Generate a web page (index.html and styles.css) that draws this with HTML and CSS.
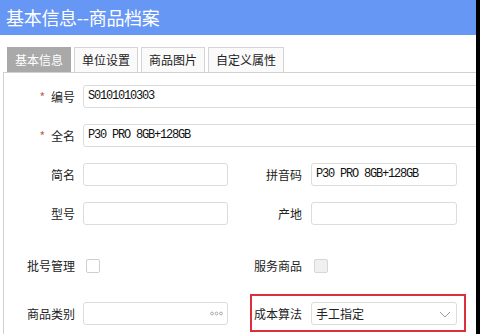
FILE: index.html
```html
<!DOCTYPE html>
<html lang="zh">
  <head>
    <meta charset="UTF-8" />
    <title>基本信息--商品档案</title>
    <link rel="stylesheet" href="styles.css">
  </head>
  <body>
    <div class="page">
      <header class="title-bar">基本信息--商品档案</header>

      <ul class="tabs">
        <li class="tab active">基本信息</li>
        <li class="tab">单位设置</li>
        <li class="tab">商品图片</li>
        <li class="tab">自定义属性</li>
      </ul>

      <div class="panel">
        <div class="row">
          <label class="label"><span class="star">*</span>编号</label>
          <div class="field wide">S0101010303</div>
        </div>

        <div class="row">
          <label class="label"><span class="star">*</span>全名</label>
          <div class="field wide">P30 PRO 8GB+128GB</div>
        </div>

        <div class="row">
          <label class="label">简名</label>
          <div class="field"></div>
          <div class="cell">
            <label class="label-r">拼音码</label>
            <div class="field">P30 PRO 8GB+128GB</div>
          </div>
        </div>

        <div class="row">
          <label class="label">型号</label>
          <div class="field"></div>
          <div class="cell">
            <label class="label-r">产地</label>
            <div class="field"></div>
          </div>
        </div>

        <div class="row check-row">
          <label class="label">批号管理</label>
          <div class="box-wrap"><span class="checkbox"></span></div>
          <div class="cell">
            <label class="label-r">服务商品</label>
            <div class="box-wrap"><span class="checkbox disabled"></span></div>
          </div>
        </div>

        <div class="row last-row">
          <label class="label">商品类别</label>
          <div class="field picker">
            <svg class="dots" width="13" height="5" viewBox="0 0 13 5">
              <circle cx="2" cy="2.5" r="1.4" />
              <circle cx="6.5" cy="2.5" r="1.4" />
              <circle cx="11" cy="2.5" r="1.4" />
            </svg>
          </div>
          <div class="cell marked">
            <label class="label-r">成本算法</label>
            <div class="field select">
              <span class="select-text">手工指定</span>
              <svg class="chevron" width="12" height="7" viewBox="0 0 12 7">
                <polyline points="1,1 6,6 11,1" />
              </svg>
            </div>
          </div>
        </div>
      </div>
    </div>
  </body>
</html>
```

FILE: styles.css
```css
* {
  margin: 0;
  padding: 0;
  box-sizing: border-box;
}

html, body {
  height: 100%;
}

body {
  background: #000; /* dark strip on the right edge */
  font-family: "Noto Sans CJK SC", "Noto Sans", sans-serif;
  font-size: 12px;
  color: #333;
  overflow: hidden;
}

.page {
  width: 476px;
  height: 334px;
  background: #fff;
  overflow: hidden;
}

.title-bar {
  height: 35px;
  line-height: 34px;
  padding-left: 6px;
  background: #6797f5;
  color: #fff;
  font-size: 18px;
  letter-spacing: -0.3px;
}

/* tabs */
.tabs {
  display: flex;
  gap: 3px;
  list-style: none;
  margin: 12px 0 0 7px;
  height: 25px;
}

.tab {
  height: 25px;
  line-height: 23px;
  padding: 0 7px;
  border: 1px solid #d4d4d4;
  border-bottom: none;
  background: #fafafa;
  color: #222;
}

.tab.active {
  background: #a9a9a9;
  border-color: #a9a9a9;
  color: #fff;
}

/* form panel */
.panel {
  margin-left: 3px;
  border-top: 1px solid #d0d0d0;
  border-left: 1px solid #d0d0d0;
  padding-top: 12px;
  height: 262px;
}

.row {
  display: flex;
  align-items: center;
  height: 23px;
  margin-bottom: 16px;
}

.row.check-row {
  margin-top: 29px;
  margin-bottom: 25px;
}

.label {
  width: 71px;
  text-align: right;
  flex-shrink: 0;
  margin-right: 8px;
  color: #222;
}

.star {
  color: #c0643f;
  margin-right: 6px;
  font-size: 12px;
}

.field {
  position: relative;
  width: 145px;
  height: 23px;
  flex-shrink: 0;
  border: 1px solid #dcdcdc;
  border-radius: 3px;
  background: #fff;
  padding-left: 4px;
  line-height: 21px;
  font-family: "Liberation Mono", monospace;
  font-size: 12px;
  letter-spacing: -1.2px;
  color: #111;
}

.field.wide {
  width: 420px;
}

.cell {
  position: relative;
  display: flex;
  align-items: center;
  margin-left: 22px;
}

.label-r {
  width: 52px;
  text-align: right;
  margin-right: 9px;
  color: #222;
}

.cell .field {
  width: 146px;
}

.box-wrap {
  width: 145px;
  padding-left: 3px;
  flex-shrink: 0;
}

.cell .box-wrap {
  width: 146px;
}

.checkbox {
  display: block;
  width: 14px;
  height: 14px;
  border: 1px solid #cfcfcf;
  border-radius: 2px;
  background: #fff;
}

.checkbox.disabled {
  background: #f0f0f0;
  border-color: #d6d6d6;
}

.dots {
  position: absolute;
  right: 4px;
  top: 8px;
}

.dots circle {
  fill: none;
  stroke: #a0a0a0;
  stroke-width: 0.9;
}

.select-text {
  font-family: "Noto Sans CJK SC", sans-serif;
  font-size: 12px;
  letter-spacing: 0;
  color: #222;
}

.chevron {
  position: absolute;
  right: 5px;
  top: 8px;
}

.chevron polyline {
  fill: none;
  stroke: #9a9a9a;
  stroke-width: 1;
}

/* red annotation box round the cost method field */
.cell.marked::after {
  content: "";
  position: absolute;
  left: 0;
  top: -8px;
  width: 212px;
  height: 34px;
  border: 2px solid #dc2f3c;
}
```
